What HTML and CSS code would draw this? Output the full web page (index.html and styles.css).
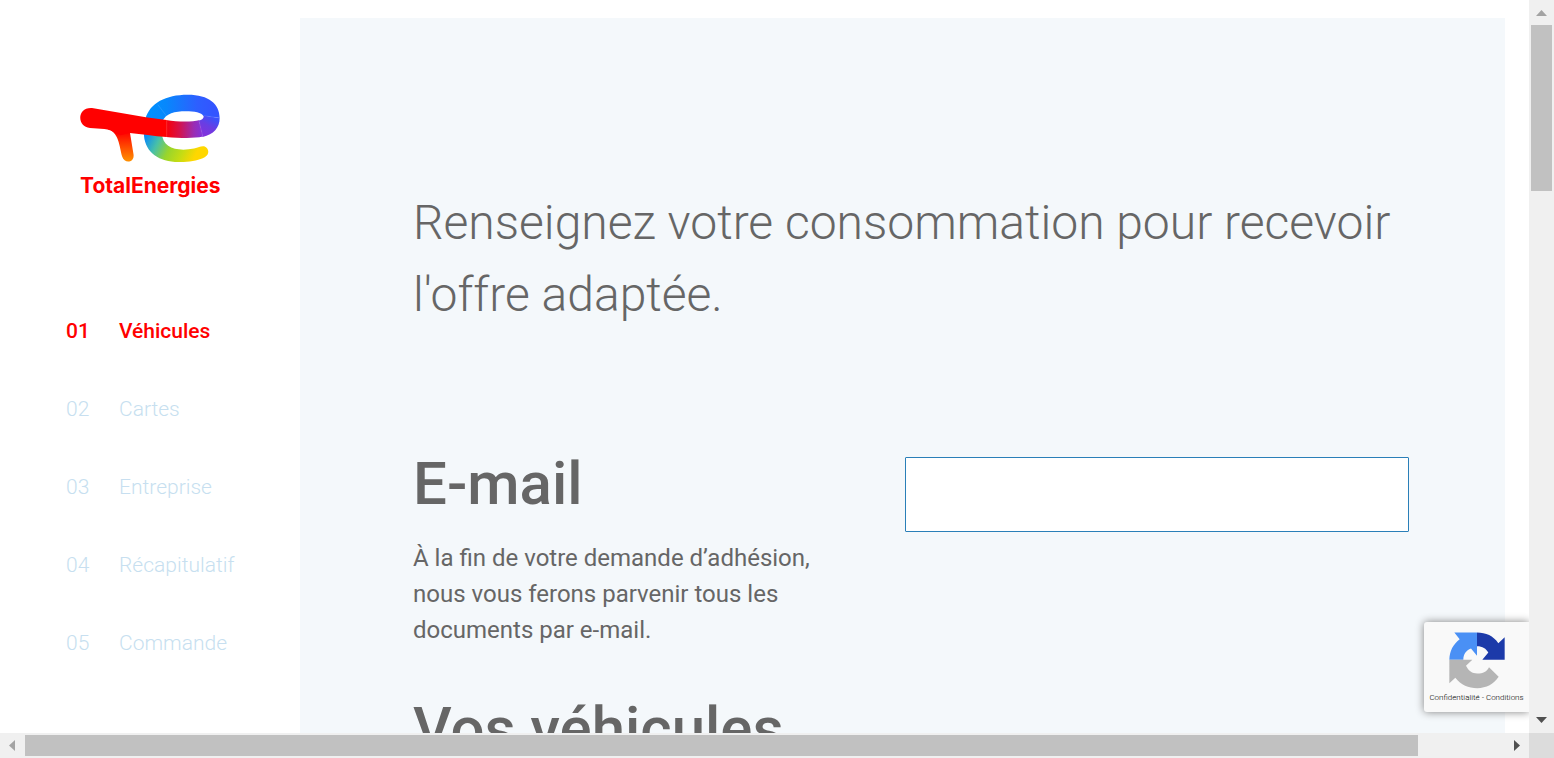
FILE: index.html
```html
<!DOCTYPE html>
<html lang="fr">
<head>
<meta charset="utf-8">
<meta name="viewport" content="width=device-width, initial-scale=1">
<title>TotalEnergies - Véhicules</title>
<link rel="stylesheet" href="styles.css">
</head>
<body>
<div class="shell">
  <div class="page">
    <aside class="sidebar">
      <a class="brand" href="#" aria-label="TotalEnergies">
        <svg class="brand-mark" viewBox="30 26 421 205" aria-hidden="true">
          <defs>
            <linearGradient id="arch" gradientUnits="userSpaceOnUse" x1="240" y1="0" x2="430" y2="0">
              <stop offset="0" stop-color="#0090ff"/><stop offset=".25" stop-color="#0788fc"/><stop offset=".75" stop-color="#2d5fff"/><stop offset="1" stop-color="#3355ff"/>
            </linearGradient>
            <linearGradient id="bar" gradientUnits="userSpaceOnUse" x1="290" y1="0" x2="400" y2="0">
              <stop offset="0" stop-color="#f80008"/><stop offset=".35" stop-color="#d5124a"/><stop offset=".75" stop-color="#9a2cb4"/><stop offset="1" stop-color="#8033dd"/>
            </linearGradient>
            <linearGradient id="turn" gradientUnits="userSpaceOnUse" x1="408" y1="150" x2="436" y2="100">
              <stop offset="0" stop-color="#8033dd"/><stop offset=".5" stop-color="#6a3de2"/><stop offset="1" stop-color="#3a52fc"/>
            </linearGradient>
            <linearGradient id="bowl" gradientUnits="userSpaceOnUse" x1="232" y1="145" x2="375" y2="215">
              <stop offset="0" stop-color="#0a8cf5"/><stop offset=".25" stop-color="#48c0a8"/><stop offset=".5" stop-color="#98d52c"/><stop offset=".75" stop-color="#c4dc14"/><stop offset="1" stop-color="#ffd700"/>
            </linearGradient>
            <linearGradient id="leg" gradientUnits="userSpaceOnUse" x1="0" y1="140" x2="0" y2="225">
              <stop offset="0" stop-color="#ff0000"/><stop offset="1" stop-color="#ff8c00"/>
            </linearGradient>
          </defs>
          <path fill="url(#bowl)" d="M222 142C222 202 268 232 332 231C362 230 389 225 405 216C424 205 415 183 400 183C391 183 386 187 373 190C322 200 277 188 277 145Z"/>
          <path fill="url(#arch)" d="M227 100C240 53 288 28 354 28C418 28 450 56 450 98L401 92C396 82 374 78 348 78C316 78 287 84 277 110Z"/>
          <path fill="url(#turn)" d="M401 91L450 98C450 127 432 148 399 155L387 106C399 104 404 97 401 91Z"/>
          <path fill="url(#bar)" d="M289 104C327 111 369 110 388 105L400 154C372 160 334 159 289 155Z"/>
          <path fill="url(#leg)" d="M110 130L180 141L191 208C194 234 163 236 157 215C148 184 148 140 110 130Z"/>
          <path fill="#ff0000" d="M66 68L228 96L290 104V155C252 152 215 147 180 143L152 150L135 145C127 135 116 133 103 131L60 128C20 126 20 65 66 68Z"/>
          <path fill="none" stroke="#ffffff" stroke-opacity=".35" d="M264 58L290 92M401 91L450 98M388 107L399 153M291 104V155"/>
        </svg>
        <span class="brand-name">TotalEnergies</span>
      </a>
      <nav aria-label="Étapes">
        <ol class="steps">
          <li><a class="step step-active" href="#vehicules" aria-current="step"><span>01</span><span>Véhicules</span></a></li>
          <li><a class="step" href="#cartes"><span>02</span><span>Cartes</span></a></li>
          <li><a class="step" href="#entreprise"><span>03</span><span>Entreprise</span></a></li>
          <li><a class="step" href="#recapitulatif"><span>04</span><span>Récapitulatif</span></a></li>
          <li><a class="step" href="#commande"><span>05</span><span>Commande</span></a></li>
        </ol>
      </nav>
    </aside>
    <main class="panel">
      <h1 class="title">Renseignez votre consommation pour recevoir l'offre adaptée.</h1>
      <section class="field-row">
        <div class="field-text">
          <h2 class="heading"><label for="email">E-mail</label></h2>
          <p class="hint">À la fin de votre demande d’adhésion, nous vous ferons parvenir tous les documents par e-mail.</p>
        </div>
        <input class="text-input" id="email" type="email">
      </section>
      <section id="vehicules">
        <h2 class="heading">Vos véhicules</h2>
      </section>
    </main>
    <div class="captcha">
      <svg class="captcha-mark" viewBox="105 61 168 170" aria-hidden="true">
        <path fill="#4a90f5" d="M189 62V132L171 110C156 116 148 127 148 144H106C107 116 117 98 137 82L121 62Z"/>
        <path fill="#1c3aa9" d="M189 62C216 62 238 72 253 94L272 76V144H205L223 122C216 110 206 103 189 103Z"/>
        <path fill="#b5b5b5" d="M106 144H175L156 162C164 178 174 185 190 185C207 185 219 179 225 166L254 195C240 217 217 229 190 229C163 229 141 220 124 198L106 214Z"/>
      </svg>
      <div class="captcha-links"><a href="#confidentialite">Confidentialité</a> - <a href="#conditions">Conditions</a></div>
    </div>
  </div>
  <div class="bar bar-vertical">
    <button class="bar-button" type="button" aria-label="Défiler vers le haut"><svg viewBox="0 0 25 25"><path fill="#a3a3a3" d="M7 16L12.500 10L18 16Z"/></svg></button>
    <div class="track"><div class="thumb thumb-vertical"></div></div>
    <button class="bar-button" type="button" aria-label="Défiler vers le bas"><svg viewBox="0 0 25 25"><path fill="#505050" d="M7 9L12.500 15L18 9Z"/></svg></button>
  </div>
  <div class="bar bar-horizontal">
    <button class="bar-button" type="button" aria-label="Défiler vers la gauche"><svg viewBox="0 0 25 25"><path fill="#a3a3a3" d="M15 7L9 12.500L15 18Z"/></svg></button>
    <div class="track"><div class="thumb thumb-horizontal"></div></div>
    <button class="bar-button" type="button" aria-label="Défiler vers la droite"><svg viewBox="0 0 25 25"><path fill="#505050" d="M10 7L16 12.500L10 18Z"/></svg></button>
  </div>
  <div class="corner"></div>
</div>
</body>
</html>
```
FILE: styles.css
```css
* {
  box-sizing: border-box;
}

body {
  margin: 0;
  font-family: Roboto, "Liberation Sans", sans-serif;
  color: #666666;
  background: #ffffff;
}

a {
  color: inherit;
  text-decoration: none;
}

h1,
h2,
p {
  margin: 0;
}

.shell {
  display: grid;
  grid-template-columns: minmax(0, 1fr) 25px;
  grid-template-rows: minmax(0, 1fr) 25px;
  height: 100vh;
}

.page {
  position: relative;
  display: grid;
  grid-template-columns: 300px minmax(0, 1fr);
  padding: 18px 24px 0 0;
  overflow: hidden;
}

.sidebar {
  padding-top: 76px;
}

.brand {
  display: flex;
  flex-direction: column;
  width: 141px;
  margin-left: 80px;
}

.brand-mark {
  display: block;
  width: 140px;
}

.brand-name {
  margin-top: 11px;
  font-family: Inter, sans-serif;
  font-size: 21px;
  font-weight: 700;
  line-height: 26px;
  color: #ff0000;
}

.steps {
  display: grid;
  gap: 54px;
  margin: 120px 0 0;
  padding: 0 0 0 66px;
  list-style: none;
}

.step {
  display: grid;
  grid-template-columns: 53px auto;
  font-size: 21px;
  font-weight: 300;
  line-height: 24px;
  color: #c7dff0;
}

.step-active {
  font-weight: 500;
  color: #ff0000;
}

.panel {
  padding: 169px 96px 0 113px;
  background: #f4f8fb;
}

.title {
  font-size: 48px;
  font-weight: 300;
  line-height: 72px;
}

.field-row {
  display: grid;
  grid-template-columns: minmax(0, 41fr) minmax(0, 42fr);
  align-items: start;
  margin-top: 117px;
}

.field-text {
  padding-right: 72px;
}

.heading {
  font-size: 60px;
  font-weight: 500;
  line-height: 72px;
}

.hint {
  margin-top: 20px;
  font-size: 24px;
  line-height: 36px;
}

.text-input {
  width: 100%;
  height: 75px;
  margin-top: 9px;
  padding: 0 24px;
  border: 1px solid #2a7fb8;
  border-radius: 1px;
  font: inherit;
  font-size: 24px;
  color: inherit;
  background: #ffffff;
}

#vehicules {
  margin-top: 45px;
}

.captcha {
  position: absolute;
  right: 0;
  bottom: 21px;
  display: flex;
  flex-direction: column;
  align-items: center;
  width: 105px;
  height: 90px;
  padding-top: 10px;
  border-radius: 3px 0 0 3px;
  background: #f9f9f9;
  box-shadow: 0 0 8px #808080;
}

.captcha-mark {
  width: 56px;
  height: 57px;
}

.captcha-links {
  margin-top: 3px;
  font-size: 8px;
  font-weight: 300;
  line-height: 12px;
  color: #000000;
  white-space: nowrap;
}

.bar {
  display: flex;
  background: #f0f0f0;
}

.bar-vertical {
  flex-direction: column;
}

.bar-button {
  flex: none;
  width: 25px;
  height: 25px;
  padding: 0;
  border: 0;
  background: transparent;
}

.bar-button svg {
  display: block;
}

.track {
  flex: 1;
}

.thumb {
  background: #c1c1c1;
}

.thumb-vertical {
  width: 21px;
  height: 24.3%;
  margin: 0 auto;
}

.thumb-horizontal {
  width: 94.2%;
  height: 21px;
  margin: 2px 0;
}

.corner {
  background: #dcdcdc;
}
```
